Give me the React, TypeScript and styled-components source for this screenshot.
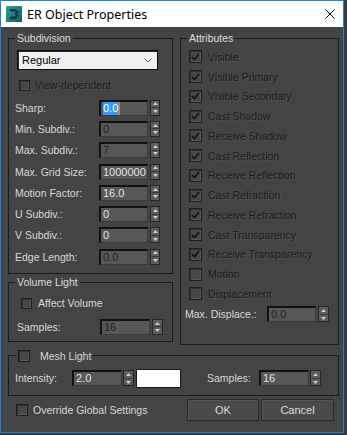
import React from "react";
import styled, { createGlobalStyle } from "styled-components";

const GlobalStyle = createGlobalStyle`
  html, body { margin: 0; padding: 0; }
  body {
    background: #393939;
    width: 347px;
    height: 435px;
    overflow: hidden;
    font-family: "Liberation Sans", Arial, sans-serif;
    font-size: 10.5px;
  }
  * { box-sizing: border-box; }
`;

const Window = styled.div`
  width: 344px;
  height: 433px;
  border: 1px solid #1883d7;
  background: #444444;
  display: flex;
  flex-direction: column;
`;

const TitleBar = styled.div`
  height: 26px;
  flex-shrink: 0;
  background: #ffffff;
  display: flex;
  align-items: center;
  padding-left: 5px;
`;

const TitleText = styled.span`
  flex: 1;
  margin-left: 5px;
  font-family: "Noto Sans", sans-serif;
  font-size: 12.5px;
  color: #000;
`;

const CloseButton = styled.div`
  width: 10px;
  height: 10px;
  margin-right: 8px;
  display: flex;
`;

const Body = styled.div`
  flex: 1;
  padding: 5px 4px 0 7px;
  display: flex;
  flex-direction: column;
`;

const Columns = styled.div`
  display: grid;
  grid-template-columns: 165px 159px;
  column-gap: 7px;
  align-items: start;
`;

const Column = styled.div`
  display: flex;
  flex-direction: column;
  gap: 2px;
`;

const Group = styled.fieldset<{ $mt?: number }>`
  margin: ${(p) => p.$mt ?? 0}px 0 0 0;
  padding: 0;
  min-width: 0;
  border: 1px solid #1c1c1c;
`;

const Legend = styled.legend<{ $ml?: number }>`
  margin-left: ${(p) => p.$ml ?? 6}px;
  padding: 0 2px;
  line-height: 12px;
  color: #dcdcdc;
  display: flex;
  align-items: center;
`;

const GroupBody = styled.div<{ $pt: number; $pb: number }>`
  padding: ${(p) => p.$pt}px 0 ${(p) => p.$pb}px 0;
  display: flex;
  flex-direction: column;
`;

const Dropdown = styled.div`
  margin-left: 8px;
  width: 141px;
  height: 20px;
  background: #f0f0f0;
  border: 1px solid #0c0c0c;
  box-shadow: inset 1px 1px 0 #2a2a2a;
  display: flex;
  align-items: center;
  justify-content: space-between;
  padding: 0 5px 0 4px;
  color: #000;
  font-size: 11px;
`;

const CheckRow = styled.div<{ $ml: number; $mt?: number; $h?: number; $gap?: number }>`
  display: flex;
  align-items: center;
  margin-left: ${(p) => p.$ml}px;
  margin-top: ${(p) => p.$mt ?? 0}px;
  height: ${(p) => p.$h ?? 14}px;
  gap: ${(p) => p.$gap ?? 5}px;
`;

const Box = styled.span<{ $size?: number }>`
  width: ${(p) => p.$size ?? 12}px;
  height: ${(p) => p.$size ?? 12}px;
  flex-shrink: 0;
  border: 1px solid #1e1e1e;
  background: #474747;
  box-shadow: inset 1px 1px 0 #333, inset -1px -1px 0 #575757;
  display: inline-flex;
  align-items: center;
  justify-content: center;
`;

const Label = styled.span<{ $dim?: boolean }>`
  color: ${(p) => (p.$dim ? "#1c1c1c" : "#d8d8d8")};
  text-shadow: ${(p) => (p.$dim ? "1px 1px 0 rgba(255,255,255,0.09)" : "none")};
  white-space: nowrap;
`;

const Rows = styled.div<{ $mt?: number }>`
  margin-top: ${(p) => p.$mt ?? 0}px;
  display: flex;
  flex-direction: column;
`;

const Row = styled.div<{ $pl: number; $label: number; $field: number; $spin: number; $h: number }>`
  height: ${(p) => p.$h}px;
  padding-left: ${(p) => p.$pl}px;
  display: grid;
  grid-template-columns: ${(p) => `${p.$label}px ${p.$field}px ${p.$spin}px`};
  column-gap: 2px;
  align-items: center;
`;

const Field = styled.div<{ $dim?: boolean; $w?: number }>`
  height: 16px;
  width: ${(p) => (p.$w ? `${p.$w}px` : "auto")};
  background: #575757;
  border-top: 2px solid #111;
  border-left: 2px solid #111;
  border-right: 1px solid #3a3a3a;
  border-bottom: 1px solid #3a3a3a;
  color: ${(p) => (p.$dim ? "#222" : "#e2e2e2")};
  padding-left: 2px;
  font-size: 11px;
  line-height: 13px;
  white-space: nowrap;
  overflow: hidden;
  display: flex;
  align-items: center;
`;

const Selected = styled.span`
  background: #3399ff;
  color: #fff;
  border-right: 1px solid #ff7a00;
  padding-right: 1px;
`;

const SpinBox = styled.div<{ $w?: number }>`
  height: 16px;
  width: ${(p) => (p.$w ? `${p.$w}px` : "auto")};
  border: 1px solid #262626;
  background: #5c5c5c;
  display: flex;
  flex-direction: column;
`;

const SpinHalf = styled.div<{ $top?: boolean }>`
  flex: 1;
  display: flex;
  align-items: center;
  justify-content: center;
  border-bottom: ${(p) => (p.$top ? "1px solid #3a3a3a" : "none")};
`;

const MeshRow = styled.div`
  height: 21px;
  margin-top: 6px;
  padding-left: 6px;
  display: flex;
  align-items: center;
`;

const MeshLabel = styled(Label)<{ $w: number }>`
  width: ${(p) => p.$w}px;
`;

const Swatch = styled.div`
  width: 45px;
  height: 19px;
  margin-left: 2px;
  background: #ffffff;
  border: 1px solid #1a1a1a;
`;

const Gap = styled.div<{ $w: number }>`
  width: ${(p) => p.$w}px;
  flex-shrink: 0;
`;

const BottomRow = styled.div`
  margin-top: 3px;
  height: 23px;
  padding-left: 8px;
  padding-right: 5px;
  display: flex;
  align-items: center;
`;

const Spacer = styled.div`
  flex: 1;
`;

const Button = styled.div<{ $w: number }>`
  width: ${(p) => p.$w}px;
  height: 22px;
  margin-left: 2px;
  background: #4a4a4a;
  border: 1px solid #2a2a2a;
  box-shadow: inset 1px 1px 0 #555;
  color: #dcdcdc;
  font-size: 11px;
  display: flex;
  align-items: center;
  justify-content: center;
`;

const Check = () => (
  <svg width="9" height="8" viewBox="0 0 9 8">
    <path d="M1 4 L3.5 6.5 L8 1" fill="none" stroke="#141414" strokeWidth="1.7" />
  </svg>
);

const CheckBox: React.FC<{ checked?: boolean; size?: number }> = ({ checked, size }) => (
  <Box $size={size}>{checked ? <Check /> : null}</Box>
);

const Spinner: React.FC<{ w?: number }> = ({ w }) => (
  <SpinBox $w={w}>
    <SpinHalf $top>
      <svg width="5" height="3" viewBox="0 0 5 3">
        <path d="M0 3 L2.5 0 L5 3 Z" fill="#cfcfcf" />
      </svg>
    </SpinHalf>
    <SpinHalf>
      <svg width="5" height="3" viewBox="0 0 5 3">
        <path d="M0 0 L2.5 3 L5 0 Z" fill="#cfcfcf" />
      </svg>
    </SpinHalf>
  </SpinBox>
);

const Logo = () => (
  <svg width="16" height="16" viewBox="0 0 16 16">
    <defs>
      <linearGradient id="lg" x1="0" y1="0" x2="1" y2="1">
        <stop offset="0" stopColor="#2aa3a0" />
        <stop offset="1" stopColor="#0d5f63" />
      </linearGradient>
    </defs>
    <rect x="0" y="0" width="16" height="16" fill="url(#lg)" />
    <path
      d="M3 3 H10 L13 6 L11 8 L13 10 L10 13 H3 L5 10.5 H9 L9.8 9.6 L8.5 8 L9.8 6.4 L9 5.5 H5 Z"
      fill="#12373a"
    />
  </svg>
);

const subRows: { label: string; value: React.ReactNode; dim?: boolean }[] = [
  { label: "Sharp:", value: <Selected>0.0</Selected> },
  { label: "Min. Subdiv.:", value: "0", dim: true },
  { label: "Max. Subdiv.:", value: "7", dim: true },
  { label: "Max. Grid Size:", value: "1000000" },
  { label: "Motion Factor:", value: "16.0" },
  { label: "U Subdiv.:", value: "0" },
  { label: "V Subdiv.:", value: "0" },
  { label: "Edge Length:", value: "0.0", dim: true },
];

const attrs: { label: string; checked: boolean }[] = [
  { label: "Visible", checked: true },
  { label: "Visible Primary", checked: true },
  { label: "Visible Secondary", checked: true },
  { label: "Cast Shadow", checked: true },
  { label: "Receive Shadow", checked: true },
  { label: "Cast Reflection", checked: true },
  { label: "Receive Reflection", checked: true },
  { label: "Cast Refraction", checked: true },
  { label: "Receive Refraction", checked: true },
  { label: "Cast Transparency", checked: true },
  { label: "Receive Transparency", checked: true },
  { label: "Motion", checked: false },
  { label: "Displacement", checked: false },
];

export default function App() {
  return (
    <>
      <GlobalStyle />
      <Window>
        <TitleBar>
          <Logo />
          <TitleText>ER Object Properties</TitleText>
          <CloseButton>
            <svg width="10" height="10" viewBox="0 0 10 10">
              <path d="M0.5 0.5 L9.5 9.5 M9.5 0.5 L0.5 9.5" stroke="#000" strokeWidth="1" />
            </svg>
          </CloseButton>
        </TitleBar>
        <Body>
          <Columns>
            <Column>
              <Group>
                <Legend>Subdivision</Legend>
                <GroupBody $pt={6} $pb={6}>
                  <Dropdown>
                    <span>Regular</span>
                    <svg width="8" height="5" viewBox="0 0 8 5">
                      <path d="M0.5 0.5 L4 4 L7.5 0.5" fill="none" stroke="#555" strokeWidth="1" />
                    </svg>
                  </Dropdown>
                  <CheckRow $ml={10} $mt={9} $h={12} $gap={5}>
                    <CheckBox size={11} />
                    <Label $dim>View-dependent</Label>
                  </CheckRow>
                  <Rows $mt={6}>
                    {subRows.map((r) => (
                      <Row key={r.label} $pl={6} $label={82} $field={49} $spin={10} $h={21.3}>
                        <Label>{r.label}</Label>
                        <Field $dim={r.dim}>{r.value}</Field>
                        <Spinner />
                      </Row>
                    ))}
                  </Rows>
                </GroupBody>
              </Group>
              <Group>
                <Legend>Volume Light</Legend>
                <GroupBody $pt={8} $pb={4}>
                  <CheckRow $ml={12} $h={14} $gap={6}>
                    <CheckBox size={11} />
                    <Label>Affect Volume</Label>
                  </CheckRow>
                  <Rows $mt={6}>
                    <Row $pl={8} $label={81} $field={50} $spin={11} $h={21}>
                      <Label>Samples:</Label>
                      <Field $dim>16</Field>
                      <Spinner />
                    </Row>
                  </Rows>
                </GroupBody>
              </Group>
            </Column>
            <Column>
              <Group>
                <Legend>Attributes</Legend>
                <GroupBody $pt={3} $pb={19}>
                  <Rows>
                    {attrs.map((a) => (
                      <CheckRow key={a.label} $ml={8} $h={19.75} $gap={6}>
                        <CheckBox checked={a.checked} size={13} />
                        <Label $dim>{a.label}</Label>
                      </CheckRow>
                    ))}
                  </Rows>
                  <Row $pl={4} $label={80} $field={49} $spin={11} $h={21}>
                    <Label>Max. Displace.:</Label>
                    <Field $dim>0.0</Field>
                    <Spinner />
                  </Row>
                </GroupBody>
              </Group>
            </Column>
          </Columns>
          <Group $mt={5}>
            <Legend $ml={7}>
              <CheckBox size={12} />
              <Gap $w={10} />
              <Label>Mesh Light</Label>
            </Legend>
            <GroupBody $pt={0} $pb={6}>
              <MeshRow>
                <MeshLabel $w={57}>Intensity:</MeshLabel>
                <Field $w={50}>2.0</Field>
                <Gap $w={1} />
                <Spinner w={11} />
                <Swatch />
                <Gap $w={26} />
                <MeshLabel $w={52}>Samples:</MeshLabel>
                <Field $w={50}>16</Field>
                <Gap $w={1} />
                <Spinner w={11} />
              </MeshRow>
            </GroupBody>
          </Group>
          <BottomRow>
            <CheckBox size={12} />
            <Gap $w={5} />
            <Label>Override Global Settings</Label>
            <Spacer />
            <Button $w={72}>OK</Button>
            <Button $w={73}>Cancel</Button>
          </BottomRow>
        </Body>
      </Window>
    </>
  );
}
